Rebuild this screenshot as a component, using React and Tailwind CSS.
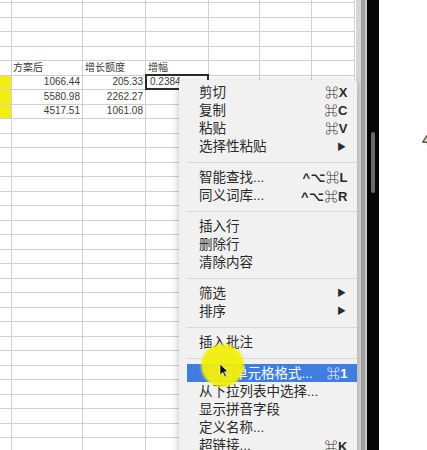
import React from "react";

const COLS = [12, 71, 63, 63, 51, 52, 43];
const ROWS = 31;

function Cell({ w, children, className = "", extra }) {
  return (
    <div
      className={`relative box-border h-full shrink-0 border-r border-b border-[#d0d0d0] flex items-center ${className}`}
      style={{ width: w }}
    >
      {children}
      {extra}
    </div>
  );
}

function Grid() {
  const rows = [];
  for (let i = 0; i < ROWS; i++) {
    const cells = COLS.map((w, c) => {
      let content = null;
      let cls = "";
      let extra = null;
      if (i === 4) {
        if (c === 1) content = <span className="pl-[1px]">方案后</span>;
        if (c === 2) content = <span className="pl-[2px]">增长额度</span>;
        if (c === 3) content = <span className="pl-[2px]">增幅</span>;
      }
      if (i >= 5 && i <= 7) {
        if (c === 0) cls = "bg-[#f3ee12]";
        const d = [
          ["1066.44", "205.33"],
          ["5580.98", "2262.27"],
          ["4517.51", "1061.08"],
        ][i - 5];
        if (c === 1) {
          cls = "justify-end pr-[2px]";
          content = <span>{d[0]}</span>;
        }
        if (c === 2) {
          cls = "justify-end pr-[2px]";
          content = <span>{d[1]}</span>;
        }
        if (i === 5 && c === 3) {
          content = <span className="pl-[4px]">0.2384</span>;
          extra = (
            <div className="absolute left-[-1px] top-[-1.5px] right-[-1px] bottom-[-1px] border-2 border-[#2a2a2a]" />
          );
        }
      }
      return (
        <Cell key={c} w={w} className={cls} extra={extra}>
          {content}
        </Cell>
      );
    });
    rows.push(
      <div key={i} className="flex h-[14.5px] shrink-0">
        {cells}
      </div>
    );
  }
  return (
    <div className="flex flex-col text-[10px] leading-none text-[#3a3a3a]">
      <div className="flex h-[3px] shrink-0">
        {COLS.map((w, c) => (
          <div
            key={c}
            className="box-border h-full shrink-0 border-r border-b border-[#d0d0d0]"
            style={{ width: w }}
          />
        ))}
      </div>
      {rows}
    </div>
  );
}

const items = [
  { t: "剪切", k: "⌘X" },
  { t: "复制", k: "⌘C" },
  { t: "粘贴", k: "⌘V" },
  { t: "选择性粘贴", sub: true },
  { sep: true },
  { t: "智能查找...", k: "^⌥⌘L" },
  { t: "同义词库...", k: "^⌥⌘R" },
  { sep: true },
  { t: "插入行" },
  { t: "删除行" },
  { t: "清除内容" },
  { sep: true },
  { t: "筛选", sub: true },
  { t: "排序", sub: true },
  { sep: true },
  { t: "插入批注" },
  { sep: true },
  { t: "设置单元格格式...", k: "⌘1", hl: true },
  { t: "从下拉列表中选择..." },
  { t: "显示拼音字段" },
  { t: "定义名称..." },
  { t: "超链接...", k: "⌘K" },
];

function Menu() {
  return (
    <div className="absolute left-[179px] top-[80px] w-[178px] h-[380px] bg-[#f1f1f1] shadow-[0_2px_8px_rgba(0,0,0,0.25)] rounded-t-[4px] pt-[3.5px] text-[13.5px] leading-none text-[#2a2a2a]">
      {items.map((it, i) =>
        it.sep ? (
          <div key={i} className="h-[12.5px] flex items-center pl-[8px]">
            <div className="h-px w-full bg-[#d9d9d9]" />
          </div>
        ) : (
          <div
            key={i}
            className={`h-[18.2px] flex items-center justify-between pl-[20px] pr-[9px] ${
              it.hl ? "bg-[#3f7de0] text-white ml-[8px] pl-[12px]" : ""
            }`}
          >
            <span>{it.t}</span>
            {it.k && <span className="text-[13px] font-bold tracking-[0.5px]">{it.k}</span>}
            {it.sub && <span className="text-[9px] pr-[2px]">▶</span>}
          </div>
        )
      )}
    </div>
  );
}

export default function App() {
  return (
    <div
      className="relative w-[427px] h-[450px] overflow-hidden bg-white flex"
      style={{ fontFamily: '"Liberation Sans", "Noto Sans CJK SC", "DejaVu Sans", sans-serif' }}
    >
      <div className="w-[356px] h-full shrink-0 overflow-hidden bg-white">
        <Grid />
      </div>
      <div className="w-[5px] h-full bg-[#d6d6d6] shrink-0" />
      <div className="w-[4px] h-full bg-[#a2a2a2] shrink-0" />
      <div className="w-[2px] h-full bg-[#c9c9c9] shrink-0" />
      <div className="w-[12px] h-full bg-[#060606] shrink-0 flex justify-center pt-[132px]">
        <div className="w-[4px] h-[61px] rounded-full bg-[#6a6a6a]" />
      </div>
      <div className="flex-1 h-full bg-white relative overflow-hidden">
        <span className="absolute left-[43px] top-[129px] text-[15px] font-bold text-[#555]">4</span>
      </div>
      <Menu />
      <div className="absolute left-[201px] top-[344px] w-[43px] h-[43px] rounded-full bg-[#f2ef0a] opacity-95 blur-[1px]" />
      <svg className="absolute left-[219px] top-[363px]" width="10" height="15" viewBox="0 0 10 15">
        <path d="M1 1 L1 12 L3.8 9.4 L5.8 14 L7.4 13.3 L5.5 8.8 L9 8.8 Z" fill="#111" stroke="#fff" strokeWidth="0.6" />
      </svg>
    </div>
  );
}
